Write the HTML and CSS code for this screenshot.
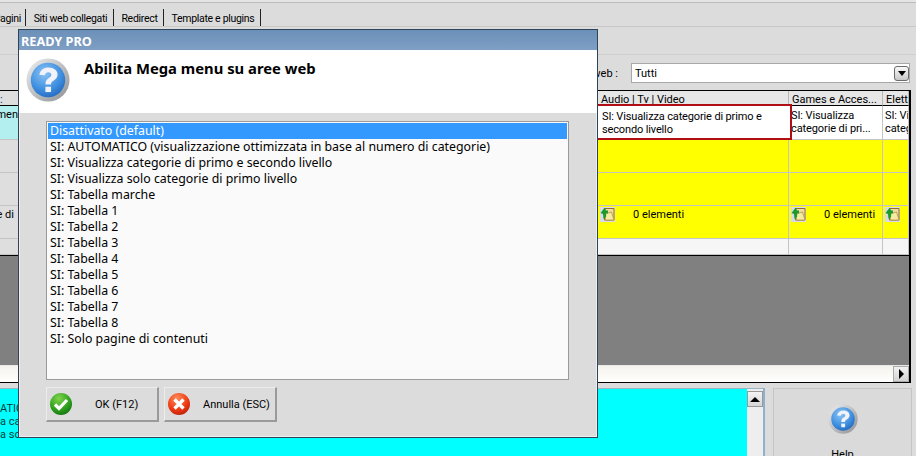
FILE: index.html
```html
<!DOCTYPE html>
<html lang="it">
<head>
<meta charset="utf-8">
<title>READY PRO</title>
<link rel="stylesheet" href="styles.css">
</head>
<body>
<svg class="defs" width="0" height="0">
  <defs>
    <radialGradient id="blue" cx="40%" cy="30%" r="80%"><stop offset="0" stop-color="#8cc4f4"/><stop offset="0.6" stop-color="#3f8fe0"/><stop offset="1" stop-color="#1e62b8"/></radialGradient>
    <linearGradient id="ring" x1="0" y1="0" x2="1" y2="1"><stop offset="0" stop-color="#eef0f2"/><stop offset="1" stop-color="#8d8f92"/></linearGradient>
    <radialGradient id="green" cx="40%" cy="25%" r="85%"><stop offset="0" stop-color="#7fd34a"/><stop offset="0.6" stop-color="#2fa01e"/><stop offset="1" stop-color="#0e6a0e"/></radialGradient>
    <radialGradient id="red" cx="40%" cy="25%" r="85%"><stop offset="0" stop-color="#ff8a5a"/><stop offset="0.6" stop-color="#ee3a14"/><stop offset="1" stop-color="#b01a08"/></radialGradient>
    <symbol id="q" viewBox="0 0 46 46">
      <circle cx="23" cy="23" r="22.500" fill="url(#ring)"/>
      <circle cx="23" cy="23" r="18" fill="url(#blue)"/>
      <path d="M14 17.500c1-5 5-7.500 9.500-7.500 5.500 0 9.500 3 9.500 7.300 0 3.200-1.900 4.900-4.300 6.400-1.800 1.100-2.500 2-2.500 4h-5.900c0-3.700 1.100-5.300 3.500-6.900 1.600-1 2.700-1.900 2.700-3.300 0-1.500-1.300-2.600-3.200-2.600-2 0-3.200 1.100-3.800 3.200z" fill="#f2f2fa"/>
      <rect x="20.300" y="30" width="5.900" height="5.600" fill="#f2f2fa"/>
    </symbol>
    <symbol id="folder" viewBox="0 0 15 15">
      <rect width="15" height="15" fill="#d6daea"/>
      <path d="M4.500 1.500h9.500v11.500H4.500z" fill="#efdca0" stroke="#96702a"/>
      <path d="M5 7l6.500-2 2.500 8H5.500z" fill="#f4ecA0" stroke="#b8923c" stroke-width=".8"/>
      <path d="M.5 6 4.800.5 6 3.500H8V6.500L6.300 6 6 10 3.500 12 3 7z" fill="#1d9a2c"/>
    </symbol>
  </defs>
</svg>

<div class="app">
  <div class="topline"></div>
  <nav class="tabs">
    <span class="tab tab-first">Pagini</span>
    <span class="tab">Siti web collegati</span>
    <span class="tab">Redirect</span>
    <span class="tab">Template e plugins</span>
  </nav>
  <div class="toolbar"></div>
  <div class="filter">
    <label class="filter-label">Aree web :</label>
    <div class="select">
      <span class="select-value">Tutti</span>
      <span class="select-btn"><i class="tri-down"></i></span>
    </div>
  </div>

  <div class="grid-wrap">
    <div class="grid">
      <div class="cell head head-first">:</div>
      <div class="cell head"></div>
      <div class="cell head">Audio | Tv | Video</div>
      <div class="cell head">Games e Acces...</div>
      <div class="cell head">Elettronica</div>

      <div class="cell row1 left tint"><span>Elemen</span></div>
      <div class="cell row1 tint"></div>
      <div class="cell row1 selected">SI: Visualizza categorie di primo e<br>secondo livello</div>
      <div class="cell row1 white">SI: Visualizza<br>categorie di pri...</div>
      <div class="cell row1 white">SI: Visualizza<br>categorie di pri...</div>

      <div class="cell left"></div>
      <div class="cell"></div>
      <div class="cell yellow"></div>
      <div class="cell yellow"></div>
      <div class="cell yellow"></div>

      <div class="cell left"></div>
      <div class="cell"></div>
      <div class="cell yellow"></div>
      <div class="cell yellow"></div>
      <div class="cell yellow"></div>

      <div class="cell left left-short"><span>e di</span></div>
      <div class="cell"></div>
      <div class="cell yellow elems"><svg class="folder" viewBox="0 0 15 15"><use href="#folder"/></svg><span>0 elementi</span></div>
      <div class="cell yellow elems"><svg class="folder" viewBox="0 0 15 15"><use href="#folder"/></svg><span>0 elementi</span></div>
      <div class="cell yellow elems"><svg class="folder" viewBox="0 0 15 15"><use href="#folder"/></svg></div>

      <div class="cell left"></div>
      <div class="cell"></div>
      <div class="cell"></div>
      <div class="cell"></div>
      <div class="cell"></div>
    </div>
    <div class="grid-empty"></div>
    <div class="hscroll"><span class="hscroll-btn"><i class="tri-right"></i></span></div>
  </div>

  <div class="bottom">
    <div class="note">
      <div class="note-text">
        <p>ATIC</p>
        <p>a cat</p>
        <p>a sol</p>
      </div>
      <div class="vscroll"><span class="vscroll-btn"><i class="tri-up"></i></span></div>
    </div>
    <div class="help">
      <svg class="help-icon"><use href="#q"/></svg>
      <span>Help</span>
    </div>
  </div>
</div>

<section class="dialog">
  <header class="dialog-title">READY PRO</header>
  <div class="dialog-head">
    <svg class="dialog-icon"><use href="#q"/></svg>
    <h1>Abilita Mega menu su aree web</h1>
  </div>
  <div class="dialog-body">
    <ul class="list">
      <li class="active">Disattivato (default)</li>
      <li>SI: AUTOMATICO (visualizzazione ottimizzata in base al numero di categorie)</li>
      <li>SI: Visualizza categorie di primo e secondo livello</li>
      <li>SI: Visualizza solo categorie di primo livello</li>
      <li>SI: Tabella marche</li>
      <li>SI: Tabella 1</li>
      <li>SI: Tabella 2</li>
      <li>SI: Tabella 3</li>
      <li>SI: Tabella 4</li>
      <li>SI: Tabella 5</li>
      <li>SI: Tabella 6</li>
      <li>SI: Tabella 7</li>
      <li>SI: Tabella 8</li>
      <li>SI: Solo pagine di contenuti</li>
    </ul>
    <div class="actions">
      <button class="btn" type="button">
        <svg class="btn-icon" viewBox="0 0 22 22"><circle cx="11" cy="11" r="11" fill="url(#green)"/><path d="M5 11.500l4 4 8-8.500" fill="none" stroke="#fff" stroke-width="3.200"/></svg>
        <span class="btn-ok">OK (F12)</span>
      </button>
      <button class="btn" type="button">
        <svg class="btn-icon" viewBox="0 0 22 22"><circle cx="11" cy="11" r="11" fill="url(#red)"/><path d="M6.500 6.500l9 9M15.500 6.500l-9 9" fill="none" stroke="#fff" stroke-width="3.400"/></svg>
        <span class="btn-cancel">Annulla (ESC)</span>
      </button>
    </div>
  </div>
</section>
</body>
</html>
```

FILE: styles.css
```css
* { box-sizing: border-box; }
html, body { margin: 0; padding: 0; }
body {
  width: 916px;
  height: 456px;
  overflow: hidden;
  position: relative;
  background: #dcdcdc;
  color: #000;
  font: 11px/14px Roboto, "Noto Sans", sans-serif;
}
.defs { position: absolute; }

.app { display: flex; flex-direction: column; height: 456px; }
.topline { height: 3px; border-bottom: 1px solid #bdbdbd; background: #e4e4e4; }

.tabs {
  display: grid;
  grid-template-columns: 26px 88px 50px 97px;
  height: 24px;
  padding: 6px 0 0 0;
  border-bottom: 1px solid #c8c8c8;
  font-size: 10.500px;
  letter-spacing: -0.300px;
}
.tab {
  height: 17px;
  padding: 3px 0 0 2px;
  border-right: 1px solid #222;
  white-space: nowrap;
  display: flex;
  justify-content: center;
  overflow: hidden;
}
.tab-first { justify-content: flex-end; padding-right: 4px; }

.toolbar { height: 28px; border-bottom: 1px solid #cfcfcf; }

.filter { display: flex; justify-content: flex-end; align-items: flex-start; height: 35px; padding: 8px 6px 0 0; gap: 13px; }
.filter-label { white-space: nowrap; padding-top: 4px; }
.select {
  width: 279px;
  height: 20px;
  background: #fff;
  border: 1px solid #a8a8a8;
  display: flex;
  align-items: center;
  justify-content: space-between;
  padding: 0 0 0 3px;
}
.select-value { padding-top: 1px; }
.select-btn {
  width: 15px;
  height: 15px;
  background: linear-gradient(#fafafa, #c8c8c8);
  border: 1px solid #6b6b6b;
  border-radius: 3px;
  display: flex;
  align-items: center;
  justify-content: center;
}
.tri-down { border: 4px solid transparent; border-top: 5px solid #000; border-bottom: 0; }
.tri-right { border: 5px solid transparent; border-left: 5px solid #000; border-right: 0; }
.tri-up { border: 5px solid transparent; border-bottom: 5px solid #000; border-top: 0; }

.grid-wrap {
  width: 911px;
  height: 293px;
  flex: none;
  border-top: 1px solid #000;
  border-bottom: 1px solid #000;
  border-right: 2px solid #000;
  display: flex;
  flex-direction: column;
  overflow: hidden;
}
.grid {
  display: grid;
  grid-template-columns: 19px 579px 191px 94px 1fr;
  grid-template-rows: 15px 34px 33px 33px 33px 16px;
  background: #f8f8f8;
}
.cell {
  border-right: 1px solid #c4c4c4;
  border-bottom: 1px solid #c4c4c4;
  padding: 1px 2px;
  overflow: hidden;
  min-width: 0;
  background: #f6f6f6;
  line-height: 15px;
  white-space: nowrap;
}
.head { background: #e6e6e6; padding: 1px 2px 0 3px; border-bottom: 1px solid #000; border-right-color: #b8b8b8; }
.head-first { padding-left: 0; background: #dedede; color: #003a80; }
.left { display: flex; justify-content: flex-end; padding-right: 0; background: #dedede; }
.left-short { padding-right: 4px; }
.tint { background: #b4efef; }
.white { background: #fff; padding-top: 3px; line-height: 13px; letter-spacing: -0.100px; }
.selected {
  background: #fff;
  padding: 4px 0 0 4px;
  border: 2px solid #b00d15;
  margin: -2px -3px 0 -2px;
  line-height: 13px;
  letter-spacing: -0.140px;
  position: relative;
}
.yellow { background: #ff0; }
.elems { display: flex; align-items: flex-start; padding: 0; }
.elems span { margin: 0 0 0 18px; padding-top: 1px; }
.folder { width: 15px; height: 15px; margin: 1px 0 0 2px; flex: none; }

.grid-empty { flex: 1; background: #808080; border-top: 1px solid #000; }
.hscroll {
  height: 17px;
  flex: none;
  background: linear-gradient(#f4f3ee, #fbfaf6 60%, #fff);
  border-top: 1px solid #e8e8e8;
  display: flex;
  justify-content: flex-end;
}
.hscroll-btn {
  width: 16px;
  height: 16px;
  background: linear-gradient(#f2f2f2, #d2d2d2);
  border: 1px solid #aaa;
  display: flex;
  align-items: center;
  justify-content: center;
}

.bottom { flex: 1; display: flex; padding: 5px 0 0 0; gap: 8px; min-height: 0; overflow: hidden; }
.note { width: 765px; flex: none; display: flex; background: #0ff; border-top: 1px solid #9ab4c4; border-right: 2px solid #8fb0cc; }
.note-text { flex: 1; padding: 13px 0 0 0; line-height: 13px; color: #003c3c; }
.note-text p { margin: 0; }
.vscroll { width: 16px; flex: none; background: #eeeeee; padding: 2px 0 0 0; }
.vscroll-btn {
  display: flex;
  width: 16px;
  height: 16px;
  background: linear-gradient(#f4f4f4, #d6d6d6);
  border: 1px solid #999;
  align-items: center;
  justify-content: center;
}
.help {
  flex: none;
  width: 139px;
  height: 80px;
  display: flex;
  flex-direction: column;
  align-items: center;
  border: 1px solid #c4c4c4;
  background: #dadada;
  padding: 15px 0 0 0;
  gap: 14px;
}
.help-icon { width: 30px; height: 30px; flex: none; }

.dialog {
  position: absolute;
  left: 18px;
  top: 29px;
  width: 580px;
  height: 409px;
  border: 1px solid #2d4459;
  display: flex;
  flex-direction: column;
  background: #dcdcdc;
  box-shadow: inset 0 0 0 1px #eee;
}
.dialog-title {
  height: 20px;
  flex: none;
  background: linear-gradient(#6b90b8, #7f9fc4);
  color: #fff;
  font: 700 12.700px/22px "Noto Sans", sans-serif;
  padding-left: 2px;
}
.dialog-head {
  height: 63px;
  flex: none;
  background: #fff;
  display: flex;
  align-items: flex-start;
  padding: 8px 0 0 7px;
}
.dialog-icon { width: 44px; height: 44px; flex: none; }
.dialog-head h1 { margin: 0 0 0 14px; font: 700 14.800px/20px "Noto Sans", sans-serif; }
.dialog-body { flex: 1; display: flex; flex-direction: column; padding: 8px 28px 0 27px; }
.list {
  list-style: none;
  margin: 0;
  padding: 1px;
  height: 259px;
  background: #fafafa;
  border: 1px solid #9a9a9a;
  font: 12.350px/16px "Noto Sans", sans-serif;
}
.list li { height: 16px; line-height: 16px; padding-left: 2px; white-space: nowrap; }
.list .active { background: #3399ff; color: #fff; }
.actions { display: flex; gap: 5px; margin-top: 7px; }
.btn {
  width: 113px;
  height: 35px;
  padding: 1px 0 0 3px;
  background: #dcdcdc;
  border-style: solid;
  border-color: #ececec #9a9a9a #9a9a9a #ececec;
  border-width: 1px 2px 2px 1px;
  display: flex;
  align-items: center;
  font: 11px/14px Roboto, sans-serif;
  color: #000;
}
.btn-icon { width: 22px; height: 22px; flex: none; margin-top: -1px; }
.btn-ok { margin-left: 23px; }
.btn-cancel { margin-left: 13px; }
```
